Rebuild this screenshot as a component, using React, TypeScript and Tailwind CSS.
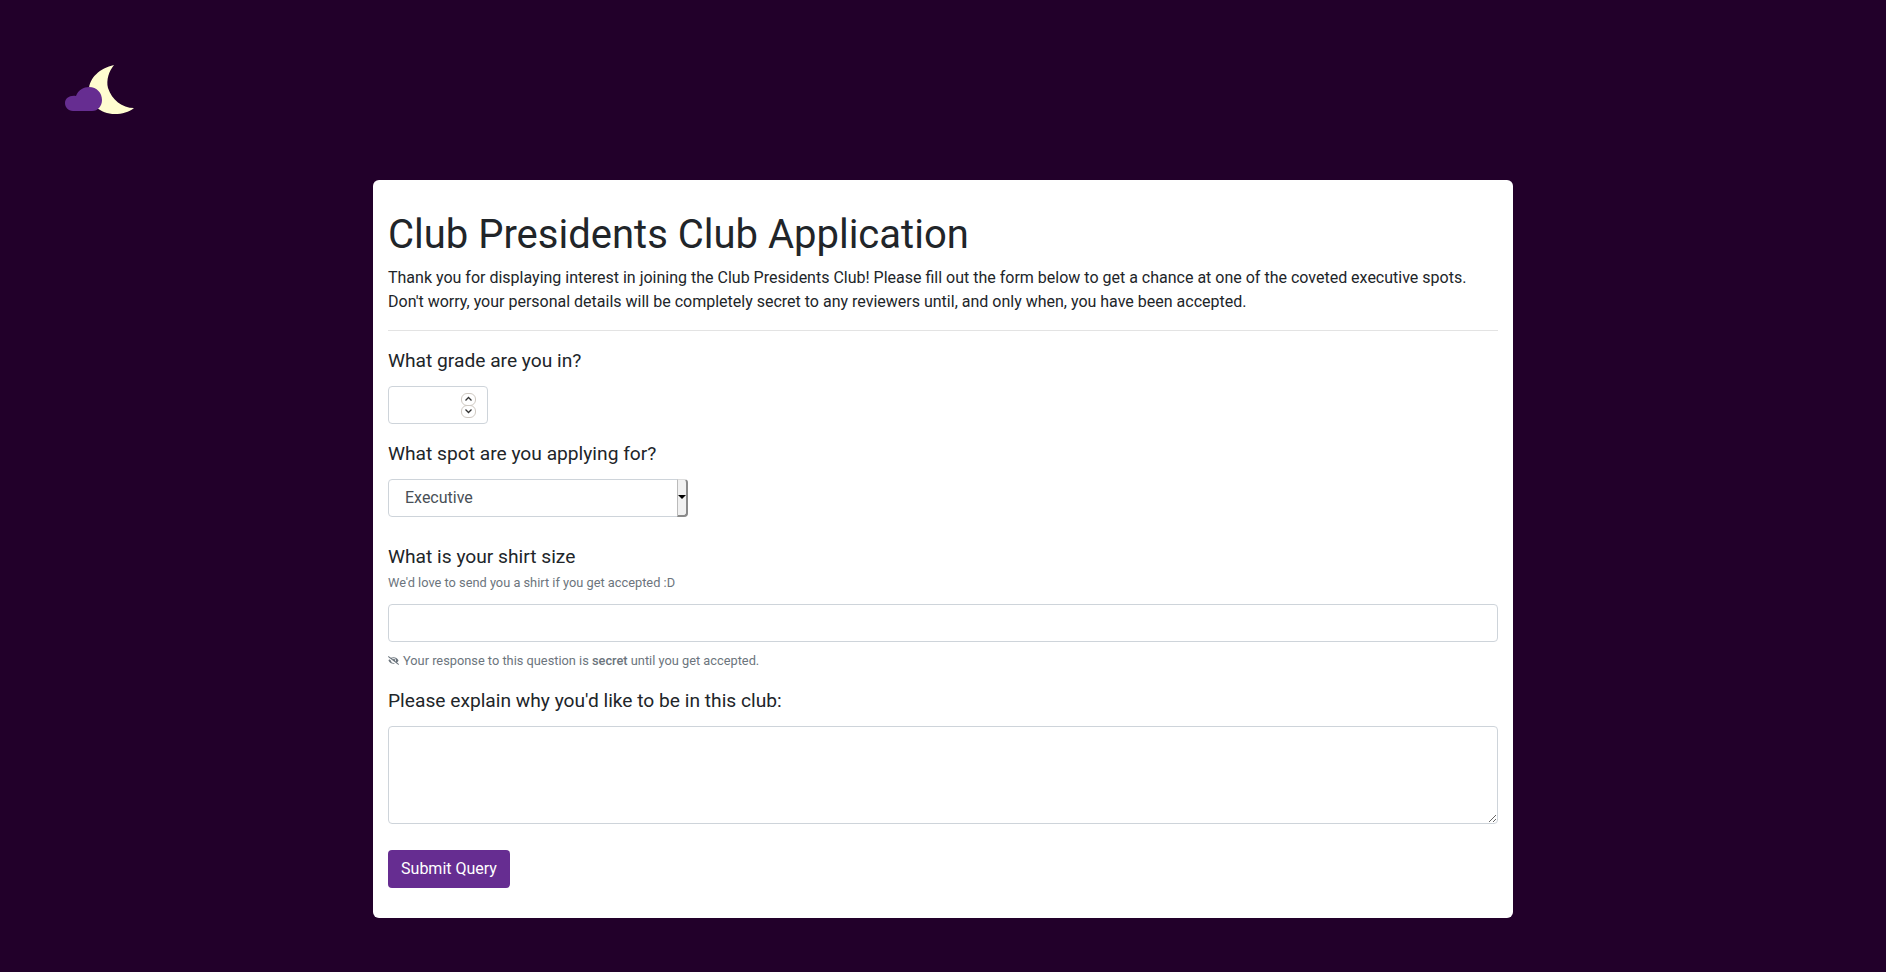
import { FaEyeSlash } from 'react-icons/fa'

const labelClass = 'block text-[19.2px] leading-[28.8px] text-[#212529]'
const fieldClass =
  'block border border-[#ced4da] rounded-[4px] bg-white text-[16px] text-[#495057] px-3 h-[38px] outline-none'

function Logo() {
  return (
    <svg width="120" height="90" viewBox="0 0 120 90" className="block">
      <path
        d="M74 25 C60 28 49 38 49 50 C49 64 60 74 75 74 C82 74 89 72 94 68 C82 68 72 60 68 48 C66 40 69 31 74 25 Z"
        fill="#fffdd0"
      />
      <path
        d="M33 71 C28 71 25 67 25 63 C25 58 30 55 36 56 C38 50 44 47 49 47 C57 47 62 53 62 60 C62 66 58 71 52 71 Z"
        fill="#662d91"
      />
    </svg>
  )
}

function SpinButton({ d }: { d: string }) {
  return (
    <div className="w-[15px] h-[13px] border border-[#cfc9c2] rounded-[6px] bg-white flex items-center justify-center">
      <svg width="9" height="6" viewBox="0 0 9 6" fill="none" stroke="#333" strokeWidth="1.300">
        <path d={d} />
      </svg>
    </div>
  )
}

export default function App() {
  return (
    <div className="min-h-[972px] bg-[#22002a] font-['Roboto',sans-serif]">
      <div className="pt-[40px] pl-[40px] h-[180px]">
        <Logo />
      </div>

      <div className="mx-auto w-[1140px] h-[738px] bg-white rounded-[6px] px-[15px] pt-[31px]">
        <h1 className="text-[40px] leading-[48px] text-[#212529] mb-[7px]">Club Presidents Club Application</h1>
        <p className="text-[16px] leading-[24px] text-[#212529]">
          Thank you for displaying interest in joining the Club Presidents Club! Please fill out the form below to get a chance at one of the coveted executive spots.
          <br />
          Don't worry, your personal details will be completely secret to any reviewers until, and only when, you have been accepted.
        </p>
        <hr className="border-t border-[#e3e3e3] mt-4 mb-4" />

        <label className={`${labelClass} mb-[10px]`}>What grade are you in?</label>
        <div className="relative w-[100px] mb-4">
          <input type="number" className={`${fieldClass} w-[100px] [appearance:textfield] [&::-webkit-inner-spin-button]:appearance-none`} />
          <div className="absolute left-[73px] top-[7px] flex flex-col -space-y-px">
            <SpinButton d="M1.500 4.500 L4.500 1.500 L7.500 4.500" />
            <SpinButton d="M1.500 1.500 L4.500 4.500 L7.500 1.500" />
          </div>
        </div>

        <label className={`${labelClass} mb-[10px]`}>What spot are you applying for?</label>
        <div className="relative w-[300px] mb-[26px]">
          <select className={`${fieldClass} w-[300px] appearance-none pl-[16px]`}>
            <option>Executive</option>
          </select>
          <div className="absolute left-[289px] top-0 h-[38px] w-[11px] bg-[#f1f1f1] border-r-2 border-b-2 border-r-[#8a8a8a] border-b-[#8a8a8a] border-t border-t-[#ddd] border-l border-l-[#bbb] rounded-r-[4px] flex items-center justify-center pointer-events-none">
            <div className="w-0 h-0 border-x-[4px] border-x-transparent border-t-[4px] border-t-black" />
          </div>
        </div>

        <label className={labelClass}>What is your shirt size</label>
        <p className="text-[12.800px] leading-[19.200px] text-[#6c757d] mt-[2px] mb-[11px]">We'd love to send you a shirt if you get accepted :D</p>
        <input type="text" className={`${fieldClass} w-full`} />
        <p className="flex items-center text-[12.800px] leading-[19.200px] text-[#6c757d] mt-[9px] mb-[17px]">
          <FaEyeSlash size={11} className="mr-[4px]" />
          <span>
            Your response to this question is <span className="font-medium">secret</span> until you get accepted.
          </span>
        </p>

        <label className={`${labelClass} mb-[10px]`}>Please explain why you'd like to be in this club:</label>
        <textarea className="block w-full h-[98px] border border-[#ced4da] rounded-[4px] outline-none mb-[26px]" />

        <button className="block h-[38px] w-[122px] bg-[#662d91] rounded-[4px] text-white text-[16px]">Submit Query</button>
      </div>
    </div>
  )
}
